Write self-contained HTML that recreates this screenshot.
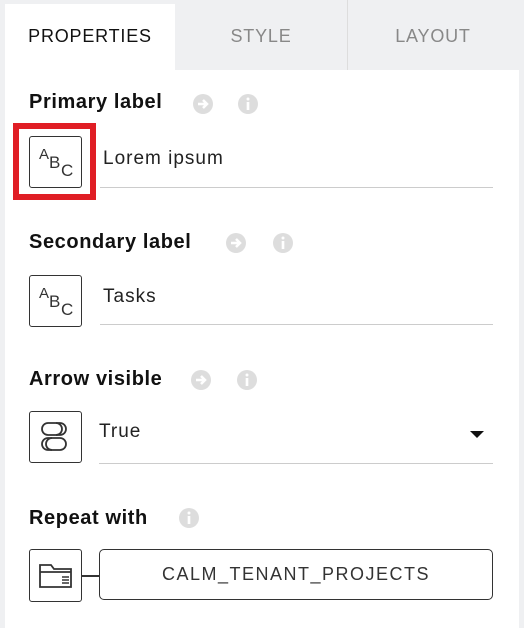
<!DOCTYPE html>
<html><head><style>
body{margin:0;width:524px;height:628px;background:#eff0f2;font-family:"Liberation Sans",sans-serif;position:relative;overflow:hidden}
.abs{position:absolute}
.panel{left:5px;top:70px;width:514px;height:558px;background:#fff}
.tab{top:0;height:70px;font-size:18px;letter-spacing:0.8px;color:#888;text-align:center;line-height:72px}
.h{left:29px;font-size:20px;letter-spacing:0.6px;font-weight:bold;color:#111}
.box{left:29px;width:53px;height:52px;border:1.5px solid #333;border-radius:3px;background:#fff;box-sizing:border-box}
.val{font-size:19px;letter-spacing:1px;color:#222}
.ul{left:100px;width:393px;height:1px;background:#ccc}
.abc{font-size:17px;color:#333}
</style></head><body>
<div class="abs" style="left:5px;top:4px;width:170px;height:70px;background:#fff"></div>
<div class="abs tab" style="left:5px;width:170px;color:#111;top:0">PROPERTIES</div>
<div class="abs tab" style="left:175px;width:172px">STYLE</div>
<div class="abs" style="left:347px;top:0;width:1px;height:70px;background:#ddd"></div>
<div class="abs tab" style="left:348px;width:170px">LAYOUT</div>
<div class="abs panel"></div>

<div class="abs h" style="top:91px">Primary label</div>
<svg class="abs" style="left:193px;top:94px" width="20" height="20"><circle cx="10" cy="10" r="10" fill="#ddd"/><path d="M5 10h8M10 6l4 4-4 4" stroke="#fff" stroke-width="2.5" fill="none"/></svg>
<svg class="abs" style="left:238px;top:94px" width="20" height="20"><circle cx="10" cy="10" r="10" fill="#ddd"/><rect x="8.7" y="8" width="2.6" height="8" fill="#fff"/><circle cx="10" cy="5" r="1.5" fill="#fff"/></svg>
<div class="abs" style="left:13px;top:123px;width:83px;height:77px;border:6px solid #e01e25;box-sizing:border-box"></div>
<div class="abs box" style="top:136px"><span class="abs abc" style="left:9px;top:9px;font-size:15px">A</span><span class="abs abc" style="left:19px;top:16px">B</span><span class="abs abc" style="left:31px;top:24px">C</span></div>
<div class="abs val" style="left:103px;top:148px">Lorem ipsum</div>
<div class="abs ul" style="top:187px"></div>

<div class="abs h" style="top:231px">Secondary label</div>
<svg class="abs" style="left:226px;top:233px" width="20" height="20"><circle cx="10" cy="10" r="10" fill="#ddd"/><path d="M5 10h8M10 6l4 4-4 4" stroke="#fff" stroke-width="2.5" fill="none"/></svg>
<svg class="abs" style="left:273px;top:233px" width="20" height="20"><circle cx="10" cy="10" r="10" fill="#ddd"/><rect x="8.7" y="8" width="2.6" height="8" fill="#fff"/><circle cx="10" cy="5" r="1.5" fill="#fff"/></svg>
<div class="abs box" style="top:275px"><span class="abs abc" style="left:9px;top:9px;font-size:15px">A</span><span class="abs abc" style="left:19px;top:16px">B</span><span class="abs abc" style="left:31px;top:24px">C</span></div>
<div class="abs val" style="left:103px;top:286px">Tasks</div>
<div class="abs ul" style="top:324px"></div>

<div class="abs h" style="top:368px">Arrow visible</div>
<svg class="abs" style="left:191px;top:370px" width="20" height="20"><circle cx="10" cy="10" r="10" fill="#ddd"/><path d="M5 10h8M10 6l4 4-4 4" stroke="#fff" stroke-width="2.5" fill="none"/></svg>
<svg class="abs" style="left:237px;top:370px" width="20" height="20"><circle cx="10" cy="10" r="10" fill="#ddd"/><rect x="8.7" y="8" width="2.6" height="8" fill="#fff"/><circle cx="10" cy="5" r="1.5" fill="#fff"/></svg>
<div class="abs box" style="top:411px"><svg class="abs" style="left:10px;top:9px" width="30" height="32"><rect x="2" y="2" width="24" height="12" rx="6" fill="none" stroke="#333" stroke-width="1.8"/><path d="M16 2a6 6 0 0 1 0 12" fill="none" stroke="#333" stroke-width="1.8"/><rect x="2" y="17" width="24" height="12" rx="6" fill="none" stroke="#333" stroke-width="1.8"/><path d="M12 17a6 6 0 0 0 0 12" fill="none" stroke="#333" stroke-width="1.8"/></svg></div>
<div class="abs val" style="left:99px;top:421px">True</div>
<svg class="abs" style="left:470px;top:431px" width="14" height="8"><path d="M0 0h14L7 7z" fill="#111"/></svg>
<div class="abs ul" style="top:463px;left:99px;width:394px"></div>

<div class="abs h" style="top:507px">Repeat with</div>
<svg class="abs" style="left:179px;top:508px" width="20" height="20"><circle cx="10" cy="10" r="10" fill="#ddd"/><rect x="8.7" y="8" width="2.6" height="8" fill="#fff"/><circle cx="10" cy="5" r="1.5" fill="#fff"/></svg>
<div class="abs box" style="top:549px;height:53px"><svg class="abs" style="left:8px;top:12px" width="36" height="28"><path d="M2 3h11l3 4h17v18H2z M2 10h31" fill="none" stroke="#333" stroke-width="1.8"/><path d="M24 15h7M24 18h7M24 21h7" stroke="#333" stroke-width="1.4"/></svg></div>
<div class="abs" style="left:81px;top:575px;width:19px;height:1.5px;background:#333"></div>
<div class="abs" style="left:99px;top:549px;width:394px;height:51px;border:1.5px solid #333;border-radius:5px;box-sizing:border-box;text-align:center;line-height:48px;font-size:18px;letter-spacing:1.5px;color:#333">CALM_TENANT_PROJECTS</div>
</body></html>
